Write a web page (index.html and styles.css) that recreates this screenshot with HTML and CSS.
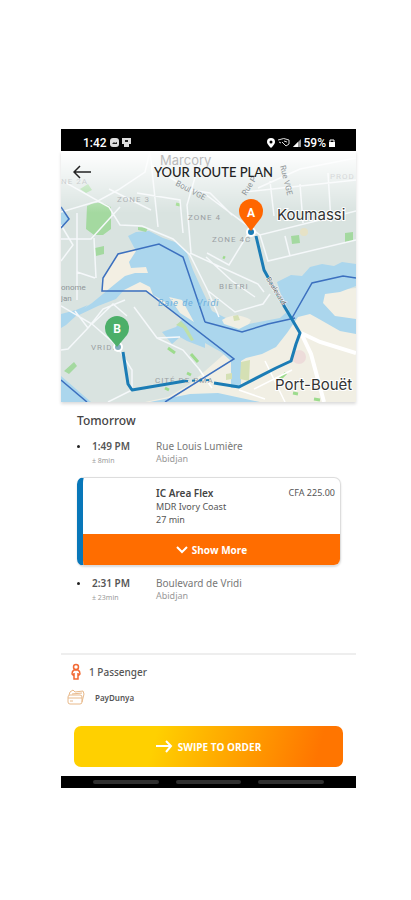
FILE: index.html
```html
<!DOCTYPE html>
<html lang="en">
<head>
    <meta charset="UTF-8">
    <meta name="viewport" content="width=device-width, initial-scale=1.0">
    <title>Your Route Plan</title>
    <link rel="stylesheet" href="styles.css">
</head>
<body>
    <div class="phone">
        <div class="status-bar">
            <span>1:42</span>
            <svg width="9" height="9" viewBox="0 0 9 9"><rect width="9" height="9" rx="3" fill="#ddd"/><path d="M2 6l2-2 1 1 2-1v2z" fill="#222"/></svg>
            <svg width="9" height="9" viewBox="0 0 9 9"><path d="M0 0h9v6H7v3H2V6H0z" fill="#ddd"/><path d="M3 2h3v2H3z" fill="#222"/></svg>
            <div class="status-right">
                <svg width="8" height="10" viewBox="0 0 8 10"><path d="M4 0a4 4 0 0 1 4 4q0 2-4 6Q0 6 0 4a4 4 0 0 1 4-4z" fill="#fff"/><circle cx="4" cy="4" r="1.500" fill="#000"/></svg>
                <svg width="12" height="9" viewBox="0 0 12 9" fill="none" stroke="#ddd"><path d="M0 2q6-3 11 0v4L8 8 4 4M6 3l3 1M1 4l2 1"/></svg>
                <svg width="8" height="8" viewBox="0 0 8 8"><path d="M8 0v8H0z" fill="#999"/><path d="M5 3v5H0z" fill="#fff"/></svg>
                <span>59%</span>
                <svg width="6" height="8" viewBox="0 0 6 8"><path d="M0 3h6v5H0z" fill="#fff"/><path d="M1 3V1h4v2" fill="none" stroke="#fff"/></svg>
            </div>
        </div>

        <div class="map-container">
            <svg class="map" viewBox="61 151 295 251" role="img" aria-label="Route map">
                <defs>
                    <linearGradient id="fade" x1="0" y1="0" x2="0" y2="1">
                        <stop offset="0" stop-color="#fff"/>
                        <stop offset="1" stop-color="#fff" stop-opacity="0"/>
                    </linearGradient>
                </defs>
                <rect x="61" y="151" width="295" height="251" fill="#d9e3e0"/>

                <!-- coast -->
                <path d="M230 349L262 340 292 315 305 305 318 292 356 288V402H145L168 397 190 384 205 371z" fill="#f1efe4"/>
                <path d="M103 291V278L118 254 136 248 170 265 165 285 195 325 170 308 146 290z" fill="#f3efe3"/>

                <!-- water -->
                <path d="M128 236L136 232 149 231 163 238 178 243 187 253 193 270 203 292 212 311 226 318 244 325 264 321 280 318 289 310 282 298 277 282 291 275 302 276 310 267 322 264 334 266 342 262 356 264V286L340 292 325 294 323 303 335 316 356 319V334L340 331 319 319 310 314 298 317 287 333 276 347 262 354 246 358 241 361V388H231V361L221 352 205 343 205 348 187 341 180 337 172 344 162 332 176 327 183 318 172 311 164 301 153 295 150 287 140 282 124 290 116 299 98 306 79 315H74L92 303 115 284 125 276 135 273 148 273 146 267 131 268 129 262 136 251z" fill="#abd6ed"/>
                <path d="M61 314L76 310 88 305 66 325 61 328zM61 210L70 219 61 228zM61 376L91 402H61zM150 402L190 394 218 393 260 402z" fill="#abd6ed"/>
                <path d="M169 297L182 300 194 322 180 313zM222 320Q236 311 251 320L249 324 239 329 224 324z" fill="#f1efe4"/>

                <!-- parks -->
                <path d="M87 206Q99 199 111 207V229L103 235H94L86 229zM80 189l8-5 4 6-6 3zM95 248l9-2v8l-8 2zM291 236l8-1 1 8-8 1zM345 233l8-1v9l-8 1zM64 371l10-9 3 4-8 8zM138 227l10 1-2 4-8-2z" fill="#a4d9a0"/>
                <path d="M176 325l5-4 5 5 8 14-3 1-8-13z" fill="#bfe0a8"/>
                <path d="M241 362l9-2-1 21-9-2zM226 374l6-1v6l-6 1zM233 316l5-1 2 5-6 1z" fill="#d5e0b4"/>
                <path d="M168 348l7 5M191 354l7 8M280 379l6-6M293 393l5 1M314 399l6 1M165 388l4 2M187 373l4 2M176 204l4 1M223 257l2 1" stroke="#9ddb8d" stroke-width="3" fill="none"/>
                <circle cx="299" cy="357" r="7" fill="#eddcda"/>
                <circle cx="304" cy="232" r="4" fill="#e6e2c6"/>

                <!-- streets -->
                <g fill="none" stroke="#f5f8fa" stroke-width="1.500">
                    <path d="M61 180L98 201 118 190 145 172 150 151M61 212L98 201 109 207 120 225 142 226 173 239 190 255 207 289 219 317M150 151L158 227M137 193L180 200 183 233M61 239H91L120 207M77 213V300M94 238L96 278M77 272L95 278M61 225L73 245 61 261M109 189L151 210M152 166L190 190 210 193 232 215M200 160L187 205 191 253M205 194L260 235 356 211M190 253L258 284 264 292M207 253L229 265 248 234M260 235L268 261 356 240M285 236L290 256M244 192L356 180M270 181L274 216M328 173L331 222M300 184L303 223M258 188L300 169 356 158M207 290L235 312 263 304 270 294M206 257L232 281 255 297"/>
                    <path d="M61 306L92 324 116 345 132 370V390L108 402M75 311L88 328 68 349 61 350M88 328L103 309 125 300M134 307L157 338 180 337M92 324L113 304 127 316M157 338L183 350 199 369"/>
                    <path d="M301 333L311 354 324 402M301 333L320 342 356 353" stroke="#fff" stroke-width="4"/>
                    <path d="M254 389L292 370M199 369L212 388M265 361L285 402M239 390L265 399" stroke="#fff"/>
                </g>

                <g class="map-label">
                    <text x="61" y="184">NE 2A</text>
                    <text x="117" y="202">ZONE 3</text>
                    <text x="188" y="220">ZONE 4</text>
                    <text x="212" y="242">ZONE 4C</text>
                    <text x="219" y="289">BIETRI</text>
                    <text x="91" y="350">VRIDI</text>
                    <text x="155" y="383">CITÉ DE PMA</text>
                    <text x="330" y="179">PROD</text>
                </g>

                <!-- zone borders -->
                <path d="M61 207L69 219 61 228M205 322L183 257 159 244 118 254 103 278 102 291H146L234 359 165 402M205 322L242 332 268 324 295 318M292 318L312 283 343 276 356 278M61 380L87 402" fill="none" stroke="#3c70bf" stroke-width="1.500"/>

                <rect x="61" y="151" width="295" height="62" fill="url(#fade)"/>

                <g class="map-street">
                    <text x="61" y="290">onome</text>
                    <text x="61" y="301">jan</text>
                    <text x="175" y="185" transform="rotate(28 175 185)">Boul VGE</text>
                    <text x="246" y="196" transform="rotate(-58 246 196)">Rue P</text>
                    <text x="280" y="166" transform="rotate(76 280 166)">Rue VGE</text>
                </g>
                <text class="map-water" x="158" y="306">Baie de Vridi</text>
                <text class="map-area" x="160" y="165">Marcory</text>

                <!-- route -->
                <path d="M256 236L264 270 280 299 300 333 296 344 291 361 276 368 239 387 214 383M185 381L132 390 128 384 123 352" fill="none" stroke="#1b7cb5" stroke-width="3" stroke-linejoin="round"/>
                <path d="M185 381L211 380" fill="none" stroke="#1b7cb5" stroke-width="2" stroke-dasharray="3 4"/>
                <text class="map-road" x="266" y="279" transform="rotate(58 266 279)">Boulevard</text>
                <text class="map-place" x="277" y="220">Koumassi</text>
                <text class="map-place" x="275" y="390">Port-Bouët</text>

                <!-- pins -->
                <circle cx="251" cy="232" r="5" fill="#fff"/>
                <circle cx="251" cy="232" r="3" fill="#1b7cb5"/>
                <path d="M251 231L241 218Q239 215 239 211A12 12 0 0 1 263 211Q263 215 261 218z" fill="#ff6600"/>
                <text class="pin-letter" x="251" y="217">A</text>
                <circle cx="118" cy="347" r="5" fill="#fff"/>
                <circle cx="118" cy="347" r="3" fill="#80aebd"/>
                <path d="M117 347L107 335Q105 332 105 328A12 12 0 0 1 129 328Q129 332 127 335z" fill="#4caf69"/>
                <text class="pin-letter" x="117" y="333">B</text>
            </svg>
            <div class="map-header">
                <button class="back-button" aria-label="Back">
                    <svg width="18" height="14" viewBox="0 0 18 14" fill="none" stroke="#222" stroke-width="1.500"><path d="M18 7H1M7 1L1 7l6 6"/></svg>
                </button>
                <h1>YOUR ROUTE PLAN</h1>
            </div>
        </div>

        <div class="plan">
            <h2>Tomorrow</h2>
            <div class="stop">
                <span class="dot"></span>
                <div class="stop-time">1:49 PM<small>± 8min</small></div>
                <div class="stop-place">Rue Louis Lumière<small>Abidjan</small></div>
            </div>
            <div class="card">
                <div class="card-body">
                    <div>
                        <h3>IC Area Flex</h3>
                        <p>MDR Ivory Coast</p>
                        <p>27 min</p>
                    </div>
                    <div class="price">CFA 225.00</div>
                </div>
                <button class="show-more">
                    <svg width="12" height="8" viewBox="0 0 12 8" fill="none" stroke="#fff" stroke-width="2"><path d="M1 1l5 5 5-5"/></svg>
                    Show More
                </button>
            </div>
            <div class="stop">
                <span class="dot"></span>
                <div class="stop-time">2:31 PM<small>± 23min</small></div>
                <div class="stop-place">Boulevard de Vridi<small>Abidjan</small></div>
            </div>
        </div>

        <div class="order">
            <div class="order-row passenger">
                <svg width="18" height="18" viewBox="0 0 18 18" fill="none" stroke="#f26a35" stroke-width="1.500"><circle cx="9" cy="4" r="2.500"/><path d="M7 7Q5 8 5 11l2 2v3h4v-3l2-2q0-3-2-4zM7 10v3M11 10v3"/></svg>
                <span>1 Passenger</span>
            </div>
            <div class="order-row payment">
                <svg width="18" height="16" viewBox="0 0 18 16" fill="none" stroke="#e8b98a"><path d="M3 6h10q2 0 2 2v5q0 2-2 2H3q-2 0-2-2V8q0-2 2-2zM2 6l1-3 3-2 2 2 8-1 1 3-2 8M5 5l10-1M1 9h14M3 12h3"/></svg>
                <span>PayDunya</span>
            </div>
            <button class="swipe-button">
                <svg width="17" height="13" viewBox="0 0 17 13" fill="none" stroke="#fff" stroke-width="2"><path d="M0 6h15M10 1l5 5-5 6"/></svg>
                SWIPE TO ORDER
            </button>
        </div>

        <div class="nav-bar"><span></span><span></span><span></span></div>
    </div>
</body>
</html>
```

FILE: styles.css
```css
body {
    margin: 0;
    padding: 129px 55px 112px 61px;
    background-color: #fff;
    color: #555;
    font-family: 'Noto Sans', 'Open Sans', sans-serif;
    box-sizing: border-box;
}

h1, h2, h3, p {
    margin: 0;
}

button {
    border: 0;
    padding: 0;
    font-family: 'Open Sans', sans-serif;
    color: #fff;
    display: flex;
    align-items: center;
    justify-content: center;
}

.status-bar {
    display: flex;
    align-items: center;
    gap: 3px;
    height: 22px;
    padding: 5px 21px 0 22px;
    box-sizing: border-box;
    background-color: #000;
    color: #fff;
    font: 500 12px Roboto, sans-serif;
}

.status-right {
    display: flex;
    align-items: center;
    gap: 3px;
    margin-left: auto;
}

.map-container {
    position: relative;
    box-shadow: 0 2px 3px rgba(0, 0, 0, 0.15);
}

.map {
    display: block;
    width: 100%;
    height: auto;
}

.map-header {
    position: absolute;
    top: 11px;
    left: 12px;
    right: 12px;
    display: flex;
    align-items: center;
}

.back-button {
    background: none;
}

.map-header h1 {
    flex: 1;
    padding-right: 8px;
    text-align: center;
    font: 500 13px/20px Lato, sans-serif;
    color: #222;
}

.map-label {
    font: 8px Roboto, sans-serif;
    letter-spacing: 1px;
    fill: #999fa3;
}

.map-street {
    font: 8px Roboto, sans-serif;
    fill: #8f9598;
}

.map-water {
    font: italic 9px Roboto, sans-serif;
    letter-spacing: 1px;
    fill: #6daedb;
}

.map-area {
    font: 13px Inter, sans-serif;
    fill: #bbb;
}

.map-road {
    font: 7px Roboto, sans-serif;
    fill: #666;
    stroke: #fff;
    stroke-width: 1px;
    paint-order: stroke;
}

.map-place {
    font: 15px Inter, sans-serif;
    fill: #333;
    stroke: #fff;
    stroke-width: 2px;
    paint-order: stroke;
}

.pin-letter {
    font: bold 12px Roboto, sans-serif;
    fill: #fff;
    text-anchor: middle;
}

.plan {
    padding: 11px 15px 0 16px;
    min-height: 240px;
}

.plan h2 {
    font-size: 12px;
    line-height: 16px;
    font-weight: 500;
    color: #444;
}

.stop {
    display: flex;
    padding-top: 10px;
    font-size: 10px;
    line-height: 14px;
}

.stop small {
    display: block;
    font-size: 9px;
    line-height: 12px;
    font-weight: 400;
    color: #999;
}

.dot {
    width: 3px;
    height: 3px;
    margin: 6px 12px 0 0;
    border-radius: 50%;
    background-color: #222;
}

.stop-time {
    width: 64px;
    font-weight: 600;
}

.stop-time small {
    padding-top: 2px;
    font-size: 7px;
}

.stop-place {
    color: #777;
}

.card {
    margin: 10px 0 0;
    border: 1px solid #ddd;
    border-left: 6px solid #0877b9;
    border-radius: 7px;
    overflow: hidden;
    box-shadow: 0 1px 2px rgba(0, 0, 0, 0.15);
}

.card-body {
    display: flex;
    justify-content: space-between;
    padding: 8px 5px 8px 73px;
    font-size: 9px;
    line-height: 13px;
}

.card h3 {
    font-size: 10px;
    line-height: 14px;
    font-weight: 600;
    color: #444;
}

.show-more {
    width: 100%;
    height: 31px;
    gap: 4px;
    background-color: #ff6d00;
    font-size: 10px;
    font-weight: 700;
}

.order {
    border-top: 2px solid #eee;
    padding: 7px 13px 9px 6px;
}

.order-row {
    display: flex;
    align-items: center;
    height: 20px;
    font-size: 10px;
}

.order-row svg {
    flex: none;
}

.passenger {
    gap: 4px;
    font-weight: 500;
}

.payment {
    gap: 10px;
    margin-top: 5px;
    font-size: 8px;
    font-weight: 600;
}

.swipe-button {
    width: calc(100% - 7px);
    height: 41px;
    margin: 19px 0 0 7px;
    gap: 5px;
    border-radius: 7px;
    background: linear-gradient(105deg, #ffd000 30%, #ff7500 90%);
    font-size: 10px;
    font-weight: 700;
}

.nav-bar {
    display: flex;
    gap: 17px;
    padding: 4px 32px;
    background-color: #000;
}

.nav-bar span {
    flex: 1;
    height: 4px;
    border-radius: 2px;
    background-color: #303030;
}
```
